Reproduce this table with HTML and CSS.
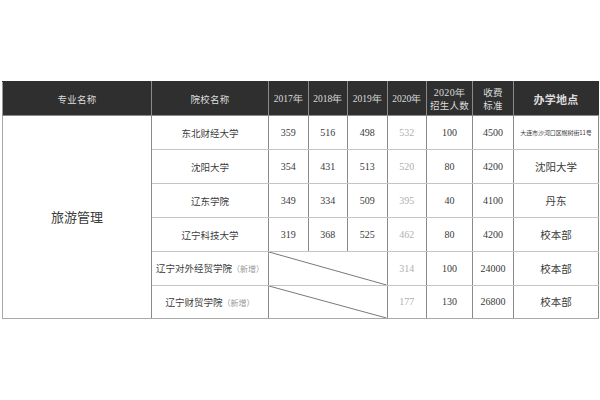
FILE: index.html
```html
<!DOCTYPE html>
<html lang="zh">
<head>
<meta charset="utf-8">
<link rel="stylesheet" href="styles.css">
</head>
<body>
<table class="tbl">
  <colgroup>
    <col class="c-major"><col class="c-school"><col class="c-y"><col class="c-y"><col class="c-y"><col class="c-y"><col class="c-enroll"><col class="c-fee"><col class="c-addr">
  </colgroup>
  <thead>
    <tr class="hrow">
      <th>专业名称</th>
      <th>院校名称</th>
      <th class="num">2017年</th>
      <th class="num">2018年</th>
      <th class="num">2019年</th>
      <th class="num">2020年</th>
      <th class="two"><span class="num">2020年</span><br>招生人数</th>
      <th class="two">收费<br>标准</th>
      <th class="big">办学地点</th>
    </tr>
  </thead>
  <tbody>
    <tr>
      <td rowspan="6" class="major">旅游管理</td>
      <td class="cn">东北财经大学</td>
      <td class="num">359</td><td class="num">516</td><td class="num">498</td><td class="num light">532</td>
      <td class="num">100</td><td class="num">4500</td>
      <td class="addr">大连市沙河口区幌树街11号</td>
    </tr>
    <tr>
      <td class="cn">沈阳大学</td>
      <td class="num">354</td><td class="num">431</td><td class="num">513</td><td class="num light">520</td>
      <td class="num">80</td><td class="num">4200</td>
      <td class="place">沈阳大学</td>
    </tr>
    <tr>
      <td class="cn">辽东学院</td>
      <td class="num">349</td><td class="num">334</td><td class="num">509</td><td class="num light">395</td>
      <td class="num">40</td><td class="num">4100</td>
      <td class="place">丹东</td>
    </tr>
    <tr>
      <td class="cn">辽宁科技大学</td>
      <td class="num">319</td><td class="num">368</td><td class="num">525</td><td class="num light">462</td>
      <td class="num">80</td><td class="num">4200</td>
      <td class="place">校本部</td>
    </tr>
    <tr>
      <td class="cn">辽宁对外经贸学院<span class="new">（新增）</span></td>
      <td colspan="3" class="diag"><svg class="slash" viewBox="0 0 100 100" preserveAspectRatio="none"><line x1="0" y1="0" x2="100" y2="100" stroke="#6a6a6a" stroke-width="0.9" vector-effect="non-scaling-stroke"/></svg></td>
      <td class="num light">314</td>
      <td class="num">100</td><td class="num">24000</td>
      <td class="place">校本部</td>
    </tr>
    <tr class="last">
      <td class="cn">辽宁财贸学院<span class="new">（新增）</span></td>
      <td colspan="3" class="diag"><svg class="slash" viewBox="0 0 100 100" preserveAspectRatio="none"><line x1="0" y1="0" x2="100" y2="100" stroke="#6a6a6a" stroke-width="0.9" vector-effect="non-scaling-stroke"/></svg></td>
      <td class="num light">177</td>
      <td class="num">130</td><td class="num">26800</td>
      <td class="place">校本部</td>
    </tr>
  </tbody>
</table>
</body>
</html>
```

FILE: styles.css
```css
html, body {
  margin: 0;
  padding: 0;
  background: #ffffff;
}
body {
  padding: 81px 0 0 2px;
  font-family: "Noto Sans CJK SC", "Liberation Serif", serif;
  color: #3a3a3a;
}
.tbl {
  border-collapse: collapse;
  table-layout: fixed;
  width: 596px;
}
.c-major { width: 149px; }
.c-school { width: 117px; }
.c-y { width: 39.5px; }
.c-enroll { width: 46px; }
.c-fee { width: 41px; }
.c-addr { width: 85px; }

.tbl th, .tbl td {
  padding: 0;
  text-align: center;
  vertical-align: middle;
  line-height: 12px;
}
.hrow th {
  height: 33px;
  background: #2f2f2f;
  color: #dcdcdc;
  font-weight: normal;
  font-size: 9.5px;
  letter-spacing: 0.3px;
  border: 1px solid #8a8a8a;
  border-top-color: #2f2f2f;
}
.hrow th.num { letter-spacing: 0; }
.hrow th:first-child { border-left-color: #9a9a9a; }
.hrow th:last-child { border-right-color: #2f2f2f; }
.hrow .two { line-height: 13px; }
.hrow .big { font-size: 11px; font-weight: 700; }
.num { font-family: "Liberation Serif", serif; font-size: 10px; }

.tbl td {
  height: 33px;
  border: 1px solid #c4c4c4;
  border-left-color: #8a8a8a;
  border-right-color: #8a8a8a;
  font-size: 10px;
}
.tbl .last td { height: 32px; }
.tbl td.major {
  font-size: 13px;
  border-left-color: #a8a8a8;
  border-bottom-color: #a8a8a8;
}
.tbl td.cn { font-size: 9.5px; color: #3c3c3c; }
.tbl td.place { font-size: 10.5px; }
.tbl td.addr { font-size: 6px; letter-spacing: -0.1px; }
.tbl td.light { color: #b0b0b0; }
.new { color: #9a9a9a; font-size: 8px; }
.tbl td.diag { line-height: 0; }
.slash {
  display: block;
  width: 100%;
  height: 33px;
}
.last .slash { height: 32px; }
.last td { border-bottom-color: #a8a8a8; }
```
